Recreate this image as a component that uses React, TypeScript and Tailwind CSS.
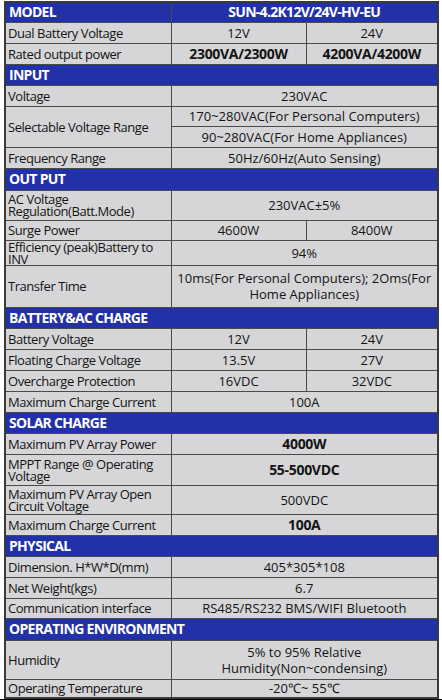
import React from "react";

type Row =
  | { kind: "section"; title: string; h: number }
  | { kind: "one"; label: string; value: string; h: number; bold?: boolean }
  | { kind: "two"; label: string; a: string; b: string; h: number; bold?: boolean };

const rows: Row[] = [
  { kind: "two", label: "Dual Battery Voltage", a: "12V", b: "24V", h: 21 },
  { kind: "two", label: "Rated output power", a: "2300VA/2300W", b: "4200VA/4200W", h: 21, bold: true },
  { kind: "section", title: "INPUT", h: 21 },
  { kind: "one", label: "Voltage", value: "230VAC", h: 21 },
];

const rows2: Row[] = [
  { kind: "one", label: "Frequency Range", value: "50Hz/60Hz(Auto Sensing)", h: 21 },
  { kind: "section", title: "OUT PUT", h: 22 },
  { kind: "one", label: "AC Voltage Regulation(Batt.Mode)", value: "230VAC±5%", h: 30 },
  { kind: "two", label: "Surge Power", a: "4600W", b: "8400W", h: 20 },
  { kind: "one", label: "Efficiency (peak)Battery to INV", value: "94%", h: 25 },
  { kind: "one", label: "Transfer Time", value: "10ms(For Personal Computers); 2Oms(For Home Appliances)", h: 42 },
  { kind: "section", title: "BATTERY&AC CHARGE", h: 21 },
  { kind: "two", label: "Battery Voltage", a: "12V", b: "24V", h: 21 },
  { kind: "two", label: "Floating Charge Voltage", a: "13.5V", b: "27V", h: 21 },
  { kind: "two", label: "Overcharge Protection", a: "16VDC", b: "32VDC", h: 21 },
  { kind: "one", label: "Maximum Charge Current", value: "100A", h: 21 },
  { kind: "section", title: "SOLAR CHARGE", h: 21 },
  { kind: "one", label: "Maximum PV Array Power", value: "4000W", h: 21, bold: true },
  { kind: "one", label: "MPPT Range @ Operating Voltage", value: "55-500VDC", h: 31, bold: true },
  { kind: "one", label: "Maximum PV Array Open Circuit Voltage", value: "500VDC", h: 29 },
  { kind: "one", label: "Maximum Charge Current", value: "100A", h: 21, bold: true },
  { kind: "section", title: "PHYSICAL", h: 21 },
  { kind: "one", label: "Dimension. H*W*D(mm)", value: "405*305*108", h: 21 },
  { kind: "one", label: "Net Weight(kgs)", value: "6.7", h: 21 },
  { kind: "one", label: "Communication interface", value: "RS485/RS232 BMS/WIFI Bluetooth", h: 20 },
  { kind: "section", title: "OPERATING ENVIRONMENT", h: 22 },
  { kind: "one", label: "Humidity", value: "5% to 95% Relative Humidity(Non~condensing)", h: 39 },
  { kind: "one", label: "Operating Temperature", value: "-20℃~ 55℃", h: 19 },
];

const cell = "border border-[#4a4a4a] bg-[#d6d6d8] p-0 align-middle";
const labelCls = `${cell} pl-[2px] pr-1 text-left text-[13px] leading-[12px] tracking-[-0.45px]`;
const valCls = `${cell} px-1 text-center leading-[16px]`;
const headCls =
  "border border-[#4a4a4a] bg-[#2231a8] p-0 text-[14px] font-bold leading-[16px] tracking-[-0.7px] text-white";

function RowView({ r }: { r: Row }) {
  if (r.kind === "section") {
    return (
      <tr style={{ height: r.h }}>
        <td colSpan={3} className={`${headCls} pl-[3px] text-left`}>
          {r.title}
        </td>
      </tr>
    );
  }
  const weight = r.bold ? "font-bold text-[14px] tracking-[-0.3px]" : "text-[13px]";
  if (r.kind === "two") {
    return (
      <tr style={{ height: r.h }}>
        <td className={labelCls}>{r.label}</td>
        <td className={`${valCls} ${weight}`}>{r.a}</td>
        <td className={`${valCls} ${weight}`}>{r.b}</td>
      </tr>
    );
  }
  return (
    <tr style={{ height: r.h }}>
      <td className={labelCls}>{r.label}</td>
      <td colSpan={2} className={`${valCls} ${weight}`}>
        {r.value}
      </td>
    </tr>
  );
}

export default function App() {
  return (
    <div className="flex h-[700px] w-[442px] flex-col bg-white font-['Open_Sans',sans-serif] leading-[16px] text-[#141414]">
      <div className="pl-[4px] pt-[1px]">
        <table className="w-[433px] table-fixed border-collapse border-2 border-[#3a3a3a]">
          <colgroup>
            <col className="w-[166px]" />
            <col className="w-[135px]" />
            <col className="w-[132px]" />
          </colgroup>
          <tbody>
            <tr className="h-[20px]">
              <td className={`${headCls} pl-[3px] text-left`}>MODEL</td>
              <td colSpan={2} className={`${headCls} text-center`}>
                SUN-4.2K12V/24V-HV-EU
              </td>
            </tr>
            {rows.map((r, i) => (
              <RowView key={i} r={r} />
            ))}
            <tr className="h-[20px]">
              <td rowSpan={2} className={labelCls}>
                Selectable Voltage Range
              </td>
              <td colSpan={2} className={`${valCls} text-[13px]`}>
                170~280VAC(For Personal Computers)
              </td>
            </tr>
            <tr className="h-[21px]">
              <td colSpan={2} className={`${valCls} text-[13px]`}>
                90~280VAC(For Home Appliances)
              </td>
            </tr>
            {rows2.map((r, i) => (
              <RowView key={i} r={r} />
            ))}
          </tbody>
        </table>
      </div>
      <div className="flex-1 bg-black" />
    </div>
  );
}
